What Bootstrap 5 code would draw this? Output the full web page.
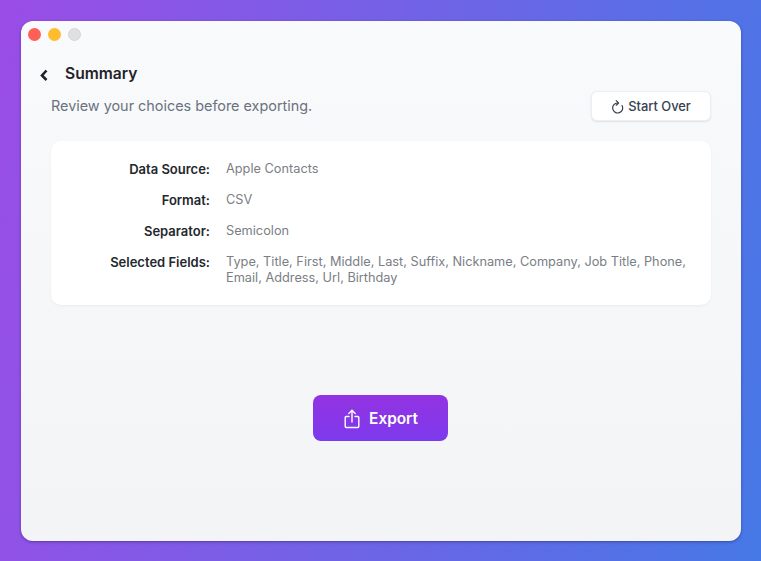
<!DOCTYPE html>
<html lang="en">
<head>
    <meta charset="UTF-8">
    <meta name="viewport" content="width=device-width, initial-scale=1.0">
    <title>Summary</title>

    <link rel="stylesheet" href="https://cdn.jsdelivr.net/npm/bootstrap@5.3.2/dist/css/bootstrap.min.css">
    <style>
        html, body { height: 100%; }
        body {
            font-family: "Inter", "Liberation Sans", sans-serif;
            background: linear-gradient(100deg, #9a4de6 0%, #4678e6 100%);
            padding: 21px 20px 20px 21px;
            overflow: hidden;
        }
        .app-window {
            width: 720px;
            height: 520px;
            border-radius: 12px;
            background: linear-gradient(180deg, #f9fafb 0%, #f3f4f6 100%);
            box-shadow: 0 1px 3px rgba(40, 20, 90, .45);
            padding: 7px 30px 0;
        }
        .title-bar { height: 13px; margin-left: -23px; gap: 7px; }
        .light { width: 13px; height: 13px; border-radius: 50%; }
        .light-red { background: #ff5f57; }
        .light-yellow { background: #febc2e; }
        .light-grey { background: #e0e0e0; border: 1px solid #d6d6d6; }
        .back-row { margin: 21px 0 0 -11px; height: 24px; }
        .back-link { width: 8px; margin-right: 17px; line-height: 0; padding-top: 1px; }
        .page-title { font-size: 15.6px; font-weight: 600; color: #1f2329; line-height: 24px; margin: 0; }
        .head-row { height: 30px; margin-top: 5px; }
        .page-sub { font-size: 14.4px; color: #6b7280; margin: 0; }
        .start-btn {
            width: 120px;
            height: 30px;
            padding: 1px 0 0;
            font-size: 12.9px;
            font-weight: 500;
            color: #374151;
            background: #fff;
            border: 1px solid #eceef1;
            border-radius: 6px;
            box-shadow: 0 1px 2px rgba(0, 0, 0, .1);
            gap: 4px;
        }
        .summary-box {
            height: 164px;
            margin-top: 20px;
            padding: 20px 20px 0 0;
            background: #fff;
            border-radius: 10px;
            box-shadow: 0 1px 3px rgba(0, 0, 0, .05);
            font-size: 12.75px;
            line-height: 16px;
        }
        .sum-row { display: flex; margin-bottom: 15px; }
        .sum-label { width: 159px; flex: none; text-align: right; font-size: 13px; font-weight: 600; color: #24272c; }
        .sum-value { margin-left: 16px; color: #7a7e85; }
        .export-row { margin-top: 90px; padding-right: 1px; }
        .export-btn {
            width: 135px;
            height: 46px;
            padding: 1px 0 0 1px;
            gap: 9px;
            font-size: 15.4px;
            font-weight: 600;
            color: #fff;
            border: 0;
            border-radius: 8px;
            background: linear-gradient(180deg, #9333e2 0%, #7c3aed 100%);
        }
        .export-btn:hover { color: #fff; background: #7c3aed; }
    </style>
</head>
<body>
    <div class="app-window">
        <div class="title-bar d-flex">
            <span class="light light-red"></span>
            <span class="light light-yellow"></span>
            <span class="light light-grey"></span>
        </div>

        <div class="back-row d-flex align-items-center">
            <span class="back-link">
                <svg width="8" height="12" viewBox="0 0 8 12" fill="none" stroke="#1f2329" stroke-width="2.600" stroke-linejoin="miter"><path d="M6.500 1.500 2 6.500l4.500 4.500"/></svg>
            </span>
            <h1 class="page-title">Summary</h1>
        </div>

        <div class="head-row d-flex justify-content-between align-items-center">
            <p class="page-sub">Review your choices before exporting.</p>
            <button type="button" class="btn start-btn d-flex align-items-center justify-content-center">
                <svg width="13" height="14" viewBox="0 0 13 14" fill="none" stroke="#374151" stroke-width="1.200" stroke-linecap="round" stroke-linejoin="round"><path d="M11 5.500A5 5 0 1 1 6.500 3"/><path d="M5.200 .6 7.600 3 5.200 5.200"/></svg>
                Start Over
            </button>
        </div>

        <div class="summary-box">
            <div class="sum-row"><div class="sum-label">Data Source:</div><div class="sum-value">Apple Contacts</div></div>
            <div class="sum-row"><div class="sum-label">Format:</div><div class="sum-value">CSV</div></div>
            <div class="sum-row"><div class="sum-label">Separator:</div><div class="sum-value">Semicolon</div></div>
            <div class="sum-row"><div class="sum-label">Selected Fields:</div><div class="sum-value">Type, Title, First, Middle, Last, Suffix, Nickname, Company, Job Title, Phone, Email, Address, Url, Birthday</div></div>
        </div>

        <div class="export-row d-flex justify-content-center">
            <button type="button" class="btn export-btn d-flex align-items-center justify-content-center">
                <svg width="16" height="20" viewBox="0 0 16 20" fill="none" stroke="#fff" stroke-width="1.400" stroke-linecap="round" stroke-linejoin="round"><path d="M5 7.500H2.200a1 1 0 0 0-1 1v9a1 1 0 0 0 1 1h11.600a1 1 0 0 0 1-1v-9a1 1 0 0 0-1-1H11"/><path d="M8 13V1.500"/><path d="M4.800 4.500 8 1.300l3.200 3.200"/></svg>
                Export
            </button>
        </div>
    </div>

    <script src="https://cdn.jsdelivr.net/npm/bootstrap@5.3.2/dist/js/bootstrap.bundle.min.js"></script>
</body>
</html>
